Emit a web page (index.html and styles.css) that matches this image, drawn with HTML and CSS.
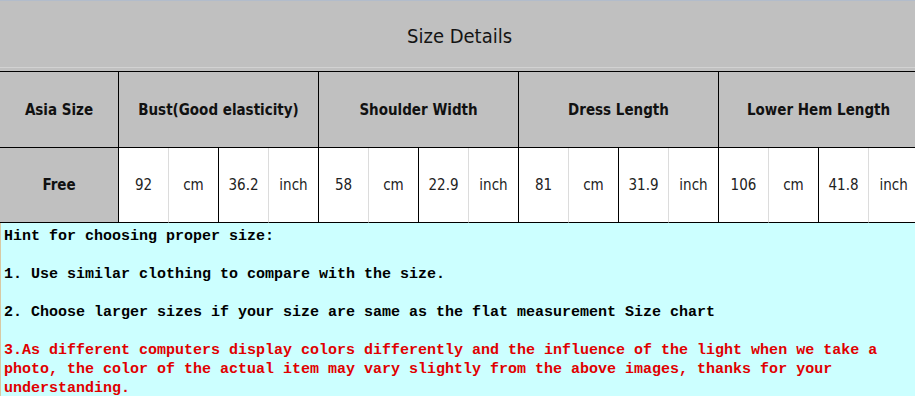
FILE: index.html
```html
<!DOCTYPE html>
<html lang="en">
<head>
<meta charset="utf-8">
<title>Size Details</title>
<link rel="stylesheet" href="styles.css">
</head>
<body>
<div class="page">
  <table class="size-table">
    <colgroup>
      <col class="c-first">
      <col span="16" class="c-sub">
    </colgroup>
    <tr class="row-title">
      <td colspan="17" class="title">Size Details</td>
    </tr>
    <tr class="row-head">
      <th class="head gray">Asia Size</th>
      <th colspan="4" class="head">Bust(Good elasticity)</th>
      <th colspan="4" class="head">Shoulder Width</th>
      <th colspan="4" class="head">Dress Length</th>
      <th colspan="4" class="head">Lower Hem Length</th>
    </tr>
    <tr class="row-data">
      <th class="head gray">Free</th>
      <td class="v soft">92</td><td class="v">cm</td><td class="v soft">36.2</td><td class="v">inch</td>
      <td class="v soft">58</td><td class="v">cm</td><td class="v soft">22.9</td><td class="v">inch</td>
      <td class="v soft">81</td><td class="v">cm</td><td class="v soft">31.9</td><td class="v">inch</td>
      <td class="v soft">106</td><td class="v">cm</td><td class="v soft">41.8</td><td class="v">inch</td>
    </tr>
  </table>
  <div class="hint">
    <p class="line">Hint for choosing proper size:</p>
    <p class="line">1. Use similar clothing to compare with the size.</p>
    <p class="line">2. Choose larger sizes if your size are same as the flat measurement Size chart</p>
    <p class="line red">3.As different computers display colors differently and the influence of the light when we take a photo, the color of the actual item may vary slightly from the above images, thanks for your understanding.</p>
  </div>
</div>
</body>
</html>
```

FILE: styles.css
```css
html, body {
  margin: 0;
  padding: 0;
  overflow: hidden;
  background: #ccffff;
}
.page {
  width: 915px;
  height: 396px;
  overflow: hidden;
  background: #ccffff;
}
.size-table {
  width: 919px;
  table-layout: fixed;
  border-collapse: separate;
  border-spacing: 0;
  font-family: "DejaVu Sans Condensed", "DejaVu Sans", sans-serif;
  font-stretch: condensed;
  color: #1a1a1a;
}
.c-first { width: 119px; }
.c-sub { width: 50px; }
.size-table td, .size-table th {
  padding: 0;
  text-align: center;
  vertical-align: middle;
  box-sizing: border-box;
}
.title {
  height: 72px;
  background: #c0c0c0;
  border-top: 1px solid #b2bccb;
  border-bottom: 1px solid #000;
  box-shadow: inset 0 -3px 0 #c0c0c0, inset 0 -4px 0 #d2d2d2;
  font-size: 20px;
  font-weight: normal;
  color: #141414;
}
.row-head .head {
  height: 76px;
}
.head {
  background: #c0c0c0;
  border-right: 1px solid #000;
  border-bottom: 1px solid #000;
  font-size: 15px;
  font-weight: bold;
  color: #111;
}
.row-data td, .row-data th {
  height: 75px;
}
.v {
  background: #fff;
  border-right: 1px solid #000;
  border-bottom: 1px solid #000;
  font-size: 15px;
  color: #222;
}
.v.soft {
  border-right-color: #dcdcdc;
}
.hint {
  border-left: 1px solid #d9c9a3;
  padding: 4px 8px 0 3px;
  font-family: "Liberation Mono", monospace;
  font-weight: bold;
  font-size: 15px;
  line-height: 19px;
  color: #000;
}
.line {
  margin: 0 0 19px;
}
.red {
  color: #e00000;
}
```
